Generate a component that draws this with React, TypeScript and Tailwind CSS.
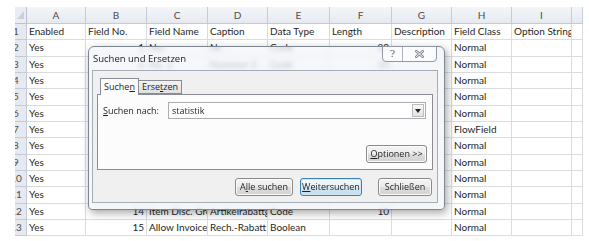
import { ReactNode } from 'react';

const COLS = [
  { key: 'A', w: 'w-[59px]' },
  { key: 'B', w: 'w-[61px]' },
  { key: 'C', w: 'w-[61px]' },
  { key: 'D', w: 'w-[60px]' },
  { key: 'E', w: 'w-[62px]' },
  { key: 'F', w: 'w-[62px]' },
  { key: 'G', w: 'w-[60px]' },
  { key: 'H', w: 'w-[60px]' },
  { key: 'I', w: 'w-[60px]' },
  { key: '', w: 'w-[11px]' },
];

// numeric columns (B, F) are right aligned like Excel numbers
const RIGHT = [1, 5];

const ROWS: string[][] = [
  ['Enabled', 'Field No.', 'Field Name', 'Caption', 'Data Type', 'Length', 'Description', 'Field Class', 'Option String'],
  ['Yes', '1', 'No.', 'Nr.', 'Code', '20', '', 'Normal', ''],
  ['Yes', '2', 'No. 2', 'Nummer 2', 'Code', '20', '', 'Normal', ''],
  ['Yes', '3', 'Description', 'Beschreibung', 'Text', '50', '', 'Normal', ''],
  ['Yes', '4', 'Search Description', 'Suchbegriff', 'Code', '50', '', 'Normal', ''],
  ['Yes', '5', 'Description 2', 'Beschreibung 2', 'Text', '50', '', 'Normal', ''],
  ['Yes', '6', 'Assembly BOM', 'Montagestückliste', 'Boolean', '', '', 'FlowField', ''],
  ['Yes', '8', 'Base Unit of Measure', 'Basiseinheit', 'Code', '10', '', 'Normal', ''],
  ['Yes', '9', 'Price Unit Conversion', 'Preiseinheit', 'Integer', '', '', 'Normal', ''],
  ['Yes', '10', 'Type', 'Art', 'Option', '', '', 'Normal', ''],
  ['Yes', '11', 'Inventory Posting Group', 'Lagerbuchungsgruppe', 'Code', '10', '', 'Normal', ''],
  ['Yes', '14', 'Item Disc. Group', 'Artikelrabattgruppe', 'Code', '10', '', 'Normal', ''],
  ['Yes', '15', 'Allow Invoice Disc.', 'Rech.-Rabatt zulassen', 'Boolean', '', '', 'Normal', ''],
];

// row heights alternate 16/17 to match the 16.33px pitch of the screenshot
const TALL = [1, 4, 7, 10];

function WinButton({ children, width, primary }: { children: ReactNode; width: string; primary?: boolean }) {
  return (
    <div
      className={
        primary
          ? `${width} h-[18px] rounded-[3px] border border-[#3c7fb1] bg-[linear-gradient(#f4f9fc,#e6f1f8_50%,#d4e6f2_50%,#c6deee)] shadow-[inset_0_0_0_1px_#cfe8f7] flex items-center justify-center text-[9px] text-[#1e1e1e]`
          : `${width} h-[18px] rounded-[3px] border border-[#8a8a8a] bg-[linear-gradient(#f4f4f4,#ececec_50%,#dedede_50%,#d2d2d2)] shadow-[inset_0_0_0_1px_#fbfbfb] flex items-center justify-center text-[9px] text-[#1e1e1e]`
      }
    >
      {children}
    </div>
  );
}

function FindDialog() {
  return (
    <div className="absolute left-[88px] top-[46px] w-[357px] h-[164px] rounded-t-[6px] rounded-b-[4px] border border-[#7d8793] bg-[#f1f4f8]/75 backdrop-blur-[2px] shadow-[2px_3px_9px_rgba(0,0,0,0.35)] flex flex-col pl-[3px] pr-[6px] pb-[6px] font-['Open_Sans',sans-serif]">
      <div className="h-[23px] shrink-0 flex items-center pl-[1px] pt-[1px] text-[9.5px] text-[#1a1a1a]">
        Suchen und Ersetzen
      </div>

      {/* caption buttons */}
      <div className="absolute right-[7px] top-[-1px] flex h-[16px] rounded-b-[4px] border border-[#8f98a3] bg-white/55 overflow-hidden">
        <div className="w-[20px] flex items-center justify-center border-r border-[#a9b1ba] text-[10px] leading-none text-[#5a6470] font-['DejaVu_Serif',serif]">
          ?
        </div>
        <div className="w-[33px] flex items-center justify-center">
          <svg width="9" height="8" viewBox="0 0 9 8">
            <path d="M1 1 L8 7 M8 1 L1 7" stroke="#7d8690" strokeWidth="2.6" strokeLinecap="square" />
            <path d="M1 1 L8 7 M8 1 L1 7" stroke="#f4f6f8" strokeWidth="1" strokeLinecap="square" />
          </svg>
        </div>
      </div>

      <div className="flex-1 border border-[#a5adb8] bg-[#f0f0f0] flex flex-col px-[4px] pt-[6px]">
        {/* tabs */}
        <div className="flex items-end pl-[3px] h-[17px] text-[9px] text-[#1e1e1e] relative z-10">
          <div className="w-[39px] h-[17px] border border-b-0 border-[#898c95] bg-[#fcfcfc] flex items-center justify-center -mb-[1px] pb-[1px]">
            Suche<span className="underline">n</span>
          </div>
          <div className="w-[43px] h-[14px] border border-l-0 border-[#898c95] bg-[linear-gradient(#f2f2f2,#e0e0e0)] flex items-center justify-center">
            Erse<span className="underline">t</span>zen
          </div>
        </div>

        {/* tab page */}
        <div className="h-[76px] border border-[#898c95] bg-[#fcfcfc] flex flex-col">
          <div className="flex items-center mt-[7px] h-[17px]">
            <div className="w-[70px] pl-[5px] text-[9px] text-[#1e1e1e]">
              <span className="underline">S</span>uchen nach:
            </div>
            <div className="flex-1 mr-[6px] h-[17px] border border-[#abadb3] bg-white flex items-center">
              <div className="flex-1 pl-[3px] text-[9px] text-[#1e1e1e]">statistik</div>
              <div className="w-[12px] h-[13px] mr-[1px] border border-[#b8bcc3] bg-[linear-gradient(#f8f8f8,#e2e2e2)] flex items-center justify-center">
                <svg width="6" height="4" viewBox="0 0 6 4">
                  <path d="M0 0 H6 L3 4 Z" fill="#222" />
                </svg>
              </div>
            </div>
          </div>
          <div className="flex-1" />
          <div className="flex justify-end pr-[5px] pb-[6px]">
            <WinButton width="w-[61px]">
              <span className="underline">O</span>ptionen &gt;&gt;
            </WinButton>
          </div>
        </div>

        {/* buttons */}
        <div className="flex justify-end mt-[8px] pr-[1px]">
          <WinButton width="w-[58px]">
            A<span className="underline">l</span>le suchen
          </WinButton>
          <div className="ml-[7px]">
            <WinButton width="w-[62px]" primary>
              <span className="underline">W</span>eitersuchen
            </WinButton>
          </div>
          <div className="ml-[16px]">
            <WinButton width="w-[54px]">Schließen</WinButton>
          </div>
        </div>
      </div>
    </div>
  );
}

export default function App() {
  return (
    <div className="relative w-[589px] h-[241px] bg-white overflow-hidden pl-[15px] pt-[7px] font-[Lato,sans-serif]">
      {/* column header */}
      <div className="flex h-[17px]">
        <div className="w-[12px] shrink-0 bg-[#e9edf3] border-r border-b border-[#b9c3cf] relative">
          <svg className="absolute left-[2px] top-[3px]" width="8" height="10" viewBox="0 0 8 10">
            <path d="M7 1 V9 H0 Z" fill="#c9d0d9" />
          </svg>
        </div>
        {COLS.map((c) => (
          <div
            key={c.key + c.w}
            className={`${c.w} shrink-0 bg-[linear-gradient(#f3f5f8,#e6eaf0)] border-r border-b border-[#c3cbd6] flex items-center justify-center text-[10px] text-[#4d4d4d]`}
          >
            {c.key}
          </div>
        ))}
      </div>

      {ROWS.map((row, r) => (
        <div key={r} className={TALL.includes(r) ? 'flex h-[17px]' : 'flex h-[16px]'}>
          <div className="w-[12px] shrink-0 overflow-hidden flex justify-end bg-[#e6eaf0] border-r border-b border-[#c3cbd6]">
            <div className="w-[20px] shrink-0 text-center text-[10px] leading-[15px] text-[#4d4d4d]">{r + 1}</div>
          </div>
          {COLS.map((c, i) => (
            <div
              key={i}
              className={
                RIGHT.includes(i) && r > 0
                  ? `${c.w} shrink-0 border-r border-b border-[#dadcdd] overflow-hidden whitespace-nowrap px-[2px] text-right text-[10px] leading-[15px] text-[#1f1f1f]`
                  : `${c.w} shrink-0 border-r border-b border-[#dadcdd] overflow-hidden whitespace-nowrap px-[2px] text-[10px] leading-[15px] text-[#1f1f1f]`
              }
            >
              {row[i] ?? ''}
            </div>
          ))}
        </div>
      ))}

      <FindDialog />
    </div>
  );
}
